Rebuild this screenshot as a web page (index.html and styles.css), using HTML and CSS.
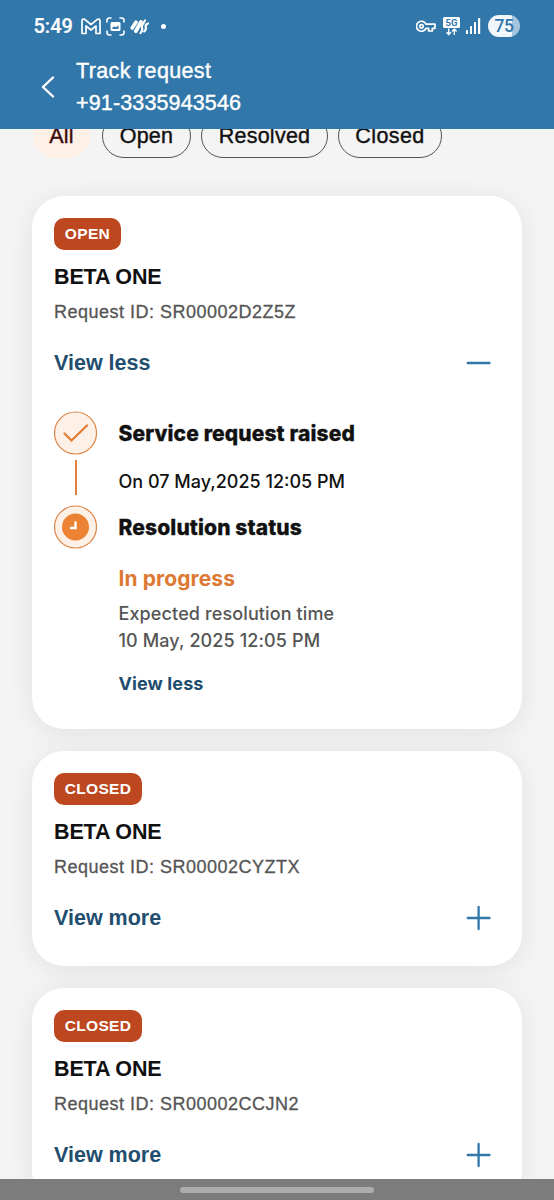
FILE: index.html
```html
<!DOCTYPE html>
<html lang="en">
<head>
<meta charset="utf-8">
<meta name="viewport" content="width=device-width, initial-scale=1">
<title>Track request</title>
<link rel="stylesheet" href="styles.css">
</head>
<body>
<div class="screen">
  <header class="header">
    <div class="status">
      <span class="clock">5:49</span>
      <svg class="ic-mail" width="20" height="17" viewBox="0 0 20 17" fill="none" stroke="#fff" stroke-width="1.7" stroke-linejoin="round"><path d="M1 15.500V2.800C1 1 2.800.6 4 1.600L10 6.500 16 1.600C17.200.6 19 1 19 2.800V15.500H15V8L10 12 5 8V15.500Z"/></svg>
      <svg class="ic-shot" width="19" height="19" viewBox="0 0 19 19" fill="none" stroke="#fff" stroke-width="1.600" stroke-linecap="round"><path d="M1 5V3.500Q1 1 3.500 1H5M14 1H15.500Q18 1 18 3.500V5M18 14V15.500Q18 18 15.500 18H14M5 18H3.500Q1 18 1 15.500V14"/><rect x="4.500" y="5" width="10" height="9" rx="1.500" fill="#fff" stroke="none"/><path d="M6.500 12V10.500L8.300 9.500 10 10.300 12.500 8.300V12Z" fill="#3277a9" stroke="none"/></svg>
      <svg class="ic-app" width="20" height="17" viewBox="0 0 20 17" fill="none" stroke="#fff" stroke-linecap="round" stroke-linejoin="round"><path stroke-width="3.600" d="M2.200 10 6 4.200"/><path stroke-width="3.800" d="M5.800 13.200 11 4"/><path stroke-width="2.200" d="M15 2.500 12.300 7C10.800 9.800 13.200 10.500 12 12.700L10.500 15M18 5.500C15.200 6.500 15.300 8 15.800 9.500C16.200 11.300 15.500 12.500 14.200 13.500"/></svg>
      <i class="dot"></i>
      <svg class="ic-key" width="20" height="13" viewBox="0 0 20 13" fill="none" stroke="#fff" stroke-width="1.700" stroke-linejoin="round"><path d="M10 4.200A5 5 0 1 0 10 8.300H12.600V11H16.300V8.300H19V4.200Z"/><circle cx="5.500" cy="6.300" r="1.700"/></svg>
      <svg class="ic-5g" width="17" height="19" viewBox="0 0 17 19"><rect x="0" y="0" width="17" height="11" rx="1.500" fill="#fff"/><text x="8.500" y="9.100" text-anchor="middle" class="net">5G</text><path d="M5.700 11.500V17.500M3.400 15.300 5.700 17.600 8 15.300M11.300 18V12.300M9 14.400 11.300 12.100 13.600 14.400" fill="none" stroke="#fff" stroke-width="1.400"/></svg>
      <svg class="ic-sig" width="15" height="16" viewBox="0 0 15 16" fill="#fff"><rect x="0" y="12" width="2" height="4" rx=".5"/><rect x="4" y="8" width="2" height="8" rx=".5"/><rect x="8" y="4" width="2" height="12" rx=".5"/><rect x="12" y="0" width="2.200" height="16" rx=".5"/></svg>
      <span class="battery">75</span>
    </div>
    <div class="bar">
      <svg class="back" width="14" height="22" viewBox="0 0 14 22" fill="none" stroke="#fff" stroke-width="2.400" stroke-linecap="round" stroke-linejoin="round"><path d="M12 1.500 2 11 12 20.500"/></svg>
      <div class="heading">
        <div class="title">Track request</div>
        <div class="phone">+91-3335943546</div>
      </div>
    </div>
  </header>
  <main class="content">
    <nav class="chips">
      <span class="chip all">All</span>
      <span class="chip open">Open</span>
      <span class="chip resolved">Resolved</span>
      <span class="chip closed">Closed</span>
    </nav>
    <section class="card">
      <span class="badge badge-open">OPEN</span>
      <h2>BETA ONE</h2>
      <p class="rid">Request ID: SR00002D2Z5Z</p>
      <div class="toggle">View less<svg width="26" height="26" viewBox="0 0 26 26"><path d="M1.700 13H23.500"/></svg></div>
      <div class="timeline">
        <div class="rail">
          <svg width="43" height="44" viewBox="0 0 43 44" fill="none"><circle cx="21.500" cy="22" r="21" fill="#fdf1e7" stroke="#dd8546" stroke-width="1.200"/><path d="M10.500 22.500 17.500 29.500 33 14.500" stroke="#e37d35" stroke-width="2.300" stroke-linecap="round"/></svg>
          <i class="line"></i>
          <svg width="43" height="44" viewBox="0 0 43 44" fill="none"><circle cx="21.500" cy="22" r="21" fill="#fdf1e7" stroke="#dd8546" stroke-width="1.200"/><circle cx="21.500" cy="22" r="13.500" fill="#ec8334"/><path d="M21.500 17.500V23H17" stroke="#fff" stroke-width="2.400" stroke-linecap="round"/></svg>
        </div>
        <div class="steps">
          <h3>Service request raised</h3>
          <p class="when">On 07 May,2025 12:05 PM</p>
          <h3 class="second">Resolution status</h3>
          <p class="progress">In progress</p>
          <p class="eta">Expected resolution time<br>10 May, 2025 12:05 PM</p>
          <p class="less">View less</p>
        </div>
      </div>
    </section>
    <section class="card">
      <span class="badge badge-closed">CLOSED</span>
      <h2>BETA ONE</h2>
      <p class="rid">Request ID: SR00002CYZTX</p>
      <div class="toggle">View more<svg width="26" height="26" viewBox="0 0 26 26"><path d="M1.700 13H23.500M12.600 2V24"/></svg></div>
    </section>
    <section class="card">
      <span class="badge badge-closed">CLOSED</span>
      <h2>BETA ONE</h2>
      <p class="rid">Request ID: SR00002CCJN2</p>
      <div class="toggle">View more<svg width="26" height="26" viewBox="0 0 26 26"><path d="M1.700 13H23.500M12.600 2V24"/></svg></div>
    </section>
  </main>
  <footer class="nav"><i class="pill"></i></footer>
</div>
</body>
</html>
```
FILE: styles.css
```css
* { box-sizing: border-box; margin: 0; padding: 0; }
body { font-family: "Liberation Sans", Arial, sans-serif; color: #111; }
.screen { width: 554px; height: 1200px; overflow: hidden; display: flex; flex-direction: column; background: #f4f4f4; }

/* Header */
.header { height: 129px; flex: none; background: #3277a9; color: #fff; }
.status { height: 52px; padding-left: 33.500px; display: flex; align-items: center; }
.status svg { flex: none; }
.clock { width: 47px; font: 500 20px/26px Roboto, sans-serif; -webkit-text-stroke: .2px; }
.ic-shot { margin-left: 5px; }
.ic-app { margin-left: 5px; }
.dot { width: 5px; height: 5px; margin-left: 11px; border-radius: 50%; background: #fff; }
.ic-key { margin-left: 250px; }
.ic-5g { margin-left: 7px; }
.net { font: 700 9.500px Roboto, sans-serif; fill: #3277a9; }
.ic-sig { margin-left: 6px; }
.battery { width: 32px; height: 22px; margin-left: 7.500px; border-radius: 11px; background: linear-gradient(90deg, #f1f6fb 75%, #a5c5de 75%); color: #3277a9; font: 500 17.500px/22px Roboto, sans-serif; letter-spacing: -.4px; text-align: center; }
.bar { display: flex; padding-left: 41px; }
.back { margin: 24px 21px 0 0; }
.heading { padding-top: 3px; font-size: 21.500px; line-height: 32px; white-space: nowrap; -webkit-text-stroke: .4px; }
.title { letter-spacing: .36px; }
.phone { letter-spacing: .14px; }

/* Filters */
.content { flex: 1; min-height: 0; overflow: hidden; padding: 0 32px; }
.chips { display: flex; height: 44px; margin: -15px 0 38px 1px; }
.chip { height: 44px; line-height: 43px; border: 1px solid #555; border-radius: 22px; text-align: center; font-size: 21.500px; letter-spacing: .25px; color: #111; -webkit-text-stroke: .4px; }
.all { width: 57px; margin-right: 12px; background: #fff0e7; border-color: #fff0e7; color: #3a0a0c; }
.open { width: 89px; margin-right: 10px; }
.resolved { width: 127px; margin-right: 10px; }
.closed { width: 104px; letter-spacing: .4px; }

/* Cards */
.card { width: 490px; margin-bottom: 22px; padding: 22px 30px 33.500px 22px; border-radius: 32px; background: #fff; box-shadow: 0 4px 28px rgba(0,0,0,.08); }
.badge { display: block; height: 32px; border-radius: 10px; background: #bd481f; color: #fff; font: 700 15.500px/32px "Liberation Sans", sans-serif; letter-spacing: .35px; text-align: center; }
.badge-open { width: 67px; }
.badge-closed { width: 88px; }
h2 { margin-top: 12px; font: 700 21.500px/30px "Liberation Sans", sans-serif; letter-spacing: -.15px; }
.rid { margin-top: 7px; font-size: 18px; line-height: 26px; letter-spacing: .5px; color: #555; -webkit-text-stroke: .3px; }
.toggle { display: flex; justify-content: space-between; align-items: center; height: 30px; margin-top: 22.500px; font-size: 21.500px; line-height: 30px; font-weight: 700; color: #214e6e; }
.toggle svg { stroke: #3277a9; stroke-width: 2.300; stroke-linecap: round; }

/* Request timeline */
.timeline { display: flex; gap: 21.500px; margin-top: 33.500px; height: 284.500px; }
.rail { width: 43px; display: flex; flex-direction: column; align-items: center; }
.line { width: 2px; height: 35px; margin: 5px 0 10px; background: #df8040; }
.steps { padding-top: 1px; font-family: Inter, "Liberation Sans", sans-serif; font-size: 18px; }
h3 { font-size: 21px; line-height: 44px; font-weight: 800; letter-spacing: .12px; -webkit-text-stroke: .3px; }
.when { margin-top: 12px; line-height: 28px; font-weight: 470; }
.second { margin-top: 10px; }
.progress { margin-top: 14px; font-size: 21px; line-height: 30px; font-weight: 650; letter-spacing: .1px; color: #dc7934; }
.eta { margin-top: 5.500px; line-height: 27px; font-weight: 470; letter-spacing: .12px; color: #555; }
.less { margin-top: 16.500px; line-height: 28px; font-weight: 660; letter-spacing: .1px; color: #214e6e; }

/* System navigation */
.nav { height: 21px; flex: none; display: flex; justify-content: center; align-items: center; background: #7c7c7c; }
.pill { width: 194px; height: 6px; border-radius: 3px; background: #adadad; }
```
